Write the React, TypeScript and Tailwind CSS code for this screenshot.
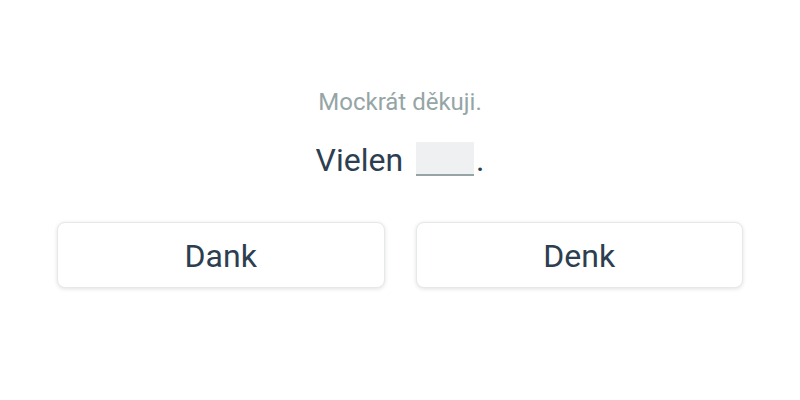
export default function App() {
  const options = ["Dank", "Denk"];
  return (
    <div
      className="w-[800px] h-[400px] bg-white flex flex-col items-center"
      style={{ fontFamily: "Roboto, 'Noto Sans', sans-serif" }}
    >
      <p className="mt-[86px] text-[24px] leading-[32px] text-[#95a5a6]">Mockrát děkuji.</p>
      <p className="mt-[22px] text-[32px] leading-[40px] text-[#2c3e50] flex items-end">
        Vielen
        <span className="ml-[13px] mr-[2px] inline-block w-[58px] h-[34px] bg-[#eef0f2] border-b-2 border-[#95a5a6] mb-[4px]" />
        .
      </p>
      <div className="mt-[42px] w-full px-[57px] grid grid-cols-2 gap-[31px]">
        {options.map((o) => (
          <button
            key={o}
            className="h-[66px] pt-[2px] rounded-lg border border-[#e6e8ea] bg-white shadow-[0_1px_4px_rgba(0,0,0,0.12)] text-[32px] text-[#2c3e50]"
          >
            {o}
          </button>
        ))}
      </div>
    </div>
  );
}
